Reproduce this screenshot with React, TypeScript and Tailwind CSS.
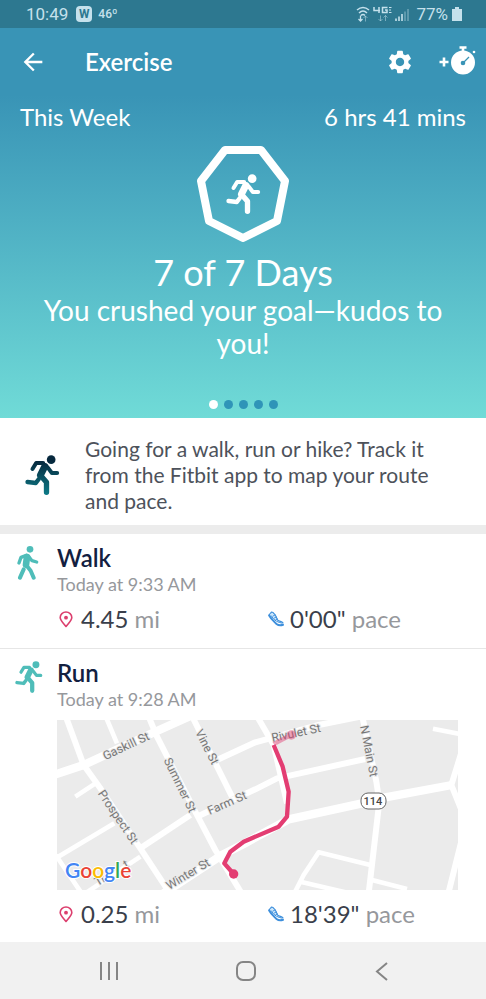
import React from 'react';
import { MdArrowBack, MdSettings } from 'react-icons/md';

function Runner({ className, gradient = false }: { className: string; gradient?: boolean }) {
  const paint = gradient ? 'url(#runner-fill)' : 'currentColor';
  return (
    <svg viewBox="0 0 104 120" className={className} fill="none" stroke={paint} strokeLinecap="round" strokeLinejoin="round" aria-hidden="true">
      {gradient && (
        <defs>
          <linearGradient id="runner-fill" gradientUnits="userSpaceOnUse" x1="0" y1="0" x2="0" y2="120">
            <stop offset="0.15" stopColor="#06283d" />
            <stop offset="1" stopColor="#0d7c88" />
          </linearGradient>
        </defs>
      )}
      <circle cx="78" cy="14" r="13" fill={paint} stroke="none" />
      <path d="M22 42 L33 24 L54 24" strokeWidth="12" />
      <path d="M59 34 L46 60" strokeWidth="21" />
      <path d="M68 38 L80 54 L96 54" strokeWidth="12" />
      <path d="M47 62 L64 82 L64 112" strokeWidth="16" />
      <path d="M7 81 L32 84 L41 72" strokeWidth="13" />
    </svg>
  );
}

function Walker({ className }: { className: string }) {
  return (
    <svg viewBox="0 0 66 102" className={className} fill="none" stroke="currentColor" strokeLinecap="round" strokeLinejoin="round" aria-hidden="true">
      <circle cx="39" cy="10" r="10" fill="currentColor" stroke="none" />
      <path d="M6 51 L12 34 L28 28" strokeWidth="10" />
      <path d="M30 33 L27 56" strokeWidth="20" />
      <path d="M34 30 L45 44 L59 48" strokeWidth="10" />
      <path d="M28 58 L41 74 L50 95" strokeWidth="12" />
      <path d="M20 70 L9 95" strokeWidth="12" />
    </svg>
  );
}

function Heptagon() {
  return (
    <svg viewBox="0 0 92 96" className="h-24 w-[92px]" fill="none" aria-hidden="true">
      <path d="M28 4 H64 L88 35 L80 75 L46 92 L12 75 L4 35 Z" stroke="white" strokeWidth="8" strokeLinejoin="round" />
    </svg>
  );
}

function Stopwatch() {
  return (
    <svg viewBox="0 0 38 32" className="h-8 w-[38px]" fill="none" aria-hidden="true">
      <path d="M6 11.500 V20.500 M1.500 16 H10.500" stroke="white" strokeWidth="2.600" />
      <circle cx="25" cy="16.500" r="12" fill="white" />
      <path d="M21.500 1.500 H28.500 M25 1 V6" stroke="white" strokeWidth="2.600" />
      <circle cx="36" cy="6" r="1.300" fill="white" />
      <path d="M25 17 L31 11" stroke="#3994b6" strokeWidth="1.300" />
      <circle cx="25" cy="17" r="2.300" fill="#3994b6" />
    </svg>
  );
}

function StatusIcons() {
  return (
    <svg viewBox="0 0 54 18" className="h-[18px] w-[54px]" fill="none" stroke="#c5e1ec" aria-hidden="true">
      <path d="M1 5 Q7 0 13 5 M3 8 Q7 4 11 8 M5 10.500 Q7 8.500 9 10.500" strokeWidth="1.500" />
      <path d="M4.500 10.500 V16 M2.500 14 L4.500 16 L6.500 14" strokeWidth="1.300" />
      <path d="M9.500 16.500 V11 M7.500 13 L9.500 11 L11.500 13" strokeWidth="1" opacity="0.5" />
      <path d="M18 2 V5.500 H24 M23 2 V8" strokeWidth="1.500" />
      <path d="M31.500 2.500 H26.500 V7.500 H31 V5 H29" strokeWidth="1.500" />
      <path d="M33 2.500 H35.500 M33 5 H35 M33 7.500 H35.500" strokeWidth="1.200" />
      <path d="M24.500 10.500 V16 M22.500 14 L24.500 16 L26.500 14 M29.500 16 V10.500 M27.500 12.500 L29.500 10.500 L31.500 12.500" strokeWidth="1" opacity="0.5" />
      <path d="M40 13.500 V16 M43 11.500 V16 M46 9 V16" strokeWidth="1.600" />
      <path d="M49 6.500 V16 M52 4 V16" strokeWidth="1.600" opacity="0.4" />
    </svg>
  );
}

function Pin() {
  return (
    <svg viewBox="0 0 14 17" className="h-[17px] w-3.5" fill="none" aria-hidden="true">
      <path d="M7 15.500 C4 11.500 1.200 9.500 1.200 6.500 A5.800 5.500 0 0 1 12.800 6.500 C12.800 9.500 10 11.500 7 15.500 Z" stroke="#dc3f6e" strokeWidth="1.600" strokeLinejoin="round" />
      <circle cx="7" cy="6.700" r="1.900" fill="#dc3f6e" />
    </svg>
  );
}

function Shoe() {
  return (
    <svg viewBox="0 0 16 16" className="size-4" fill="none" stroke="#3d8fdc" strokeLinecap="round" strokeLinejoin="round" aria-hidden="true">
      <path d="M1 4.500 L4 1 L5.500 1.500 L7 4.500 L9.500 9 L15 11.500 V13.500 Z" fill="#cfe8fb" stroke="none" />
      <path d="M1.200 4.200 C1 2.500 3 2.500 3.500 1 L5 1.500 C6 3 7 3 7.500 4.500 L9.500 8.800 C11 10.500 13.500 10.300 15 11.800" strokeWidth="1.200" />
      <path d="M1.200 4.500 C3 8 6 10.500 8.500 13 C10.500 14.500 13 14.500 15 13.800" strokeWidth="2" />
      <path d="M3.500 5 C5 8 8 11 13.500 12" strokeWidth="1" />
      <path d="M5 5 L7 4 M6.300 7 L8.300 6 M7.500 9 L9.300 8" strokeWidth="0.900" />
    </svg>
  );
}

const streetNames = [
  { name: 'Gaskill St', x: 69, y: 26, angle: -25 },
  { name: 'Prospect St', x: 61, y: 97, angle: 56 },
  { name: 'Summer St', x: 123, y: 65, angle: 64 },
  { name: 'Vine St', x: 150, y: 27, angle: 63 },
  { name: 'Farm St', x: 170, y: 83, angle: -24 },
  { name: 'Winter St', x: 131, y: 154, angle: -31 },
  { name: 'Tr', x: 43, y: 160, angle: -31 },
  { name: 't', x: 69, y: 144, angle: -31 },
  { name: 'Rivulet St', x: 239, y: 13, angle: -12 },
  { name: 'N Main St', x: 312, y: 31, angle: 79 },
];

function RouteMap() {
  return (
    <svg viewBox="0 0 401 170" className="block w-full bg-[#ebebeb] font-[Roboto,sans-serif]" role="img" aria-label="Map of the run">
      <g transform="scale(0.33333)" fill="none" stroke="white" strokeLinejoin="round">
        <g strokeWidth="25">
          <path d="M-10 165 L80 135 L285 40 L400 -12" />
          <path d="M320 520 L495 405 L560 372 L695 298 L915 250 L985 232 L1185 195" />
        </g>
        <g strokeWidth="18">
          <path d="M28 -6 L80 135 L130 205 L250 385 L340 522" />
          <path d="M275 -10 L300 50 L420 285 L475 390 L555 522" />
          <path d="M405 -12 L525 230" />
          <path d="M480 120 L595 67 L650 52 L785 15 L920 -12" />
          <path d="M420 290 L595 208 L660 175 L925 117" />
          <path d="M602 -8 L650 75 L690 250" />
          <path d="M916 -10 L958 185 L967 245 L935 520" />
          <path d="M1214 95 L1183 195 L1214 272" />
          <path d="M1214 360 L1174 520" />
          <path d="M250 385 L400 285" />
        </g>
        <g strokeWidth="14">
          <path d="M55 230 L120 187" />
          <path d="M148 -6 L180 70" />
          <path d="M-8 417 L172 310" />
          <path d="M-4 405 L74 520" />
          <path d="M85 520 L250 410" />
          <path d="M1128 26 L1210 42" />
          <path d="M712 520 L740 465 L785 397 L940 435" />
          <path d="M730 485 L870 518" />
          <path d="M945 480 L1050 507" />
        </g>
      </g>
      <g fill="#777777" stroke="#ebebeb" strokeWidth="2" className="text-[12px]" textAnchor="middle">
        {streetNames.map((s) => (
          <text key={s.name} transform={`translate(${s.x} ${s.y}) rotate(${s.angle})`} dy="4" paintOrder="stroke">
            {s.name}
          </text>
        ))}
      </g>
      <rect x="304" y="73" width="25" height="16" rx="7" fill="white" stroke="#666666" />
      <text x="316" y="85" textAnchor="middle" fill="#444444" className="text-[11px] font-medium">114</text>
      <g transform="scale(0.33333)" fill="none" stroke="#e33d72">
        <g opacity="0.45">
          <path d="M650 72 L700 46" strokeWidth="13" />
          <circle cx="703" cy="45" r="14" fill="#e33d72" stroke="none" />
        </g>
        <path d="M650 75 L677 140 L695 215 L690 290 L665 320 L560 365 L520 395 L502 430 L530 462" strokeWidth="13" strokeLinejoin="round" />
        <circle cx="530" cy="462" r="14" fill="#e33d72" stroke="none" />
      </g>
      <text x="8" y="158" className="font-[Lato,sans-serif] text-[21px] font-semibold" stroke="#ffffff" strokeWidth="2" paintOrder="stroke">
        <tspan fill="#4285f4">G</tspan>
        <tspan fill="#ea4335">o</tspan>
        <tspan fill="#fbbc05">o</tspan>
        <tspan fill="#4285f4">g</tspan>
        <tspan fill="#34a853">l</tspan>
        <tspan fill="#ea4335">e</tspan>
      </text>
    </svg>
  );
}

function Stats({ distance, pace }: { distance: string; pace: string }) {
  return (
    <div className="grid grid-cols-[211px_1fr] text-2xl leading-8 text-[#3a3f4b]">
      <p className="flex items-center gap-2 pl-0.5">
        <Pin />
        <span>{distance} <span className="text-[#96989c]">mi</span></span>
      </p>
      <p className="flex items-center gap-1.5">
        <Shoe />
        <span>{pace} <span className="text-[#96989c]">pace</span></span>
      </p>
    </div>
  );
}

export default function App() {
  return (
    <div className="bg-white font-[Lato,sans-serif]">
      <div className="flex h-7 items-center bg-[#2d7890] pl-[26px] pr-6 font-[Roboto,sans-serif] text-[#c5e1ec]">
        <span className="text-[17px] leading-7">10:49</span>
        <span className="ml-2 flex size-4 items-center justify-center rounded bg-[#c5e1ec] text-[12px] font-bold text-[#2d7890]">W</span>
        <span className="ml-1.5 text-[12px] font-medium">46º</span>
        <span className="ml-auto flex items-center gap-1.5">
          <StatusIcons />
          <span className="flex items-center gap-1 text-[17px] leading-7">
            77%
            <svg viewBox="0 0 10 14" className="h-3.5 w-2.5" fill="#c5e1ec" aria-hidden="true">
              <path d="M3 0 H7 V2 H10 V14 H0 V2 H3 Z" />
            </svg>
          </span>
        </span>
      </div>

      <header className="flex h-[67px] items-center bg-[#3994b6] pl-[19px] pr-2.5 text-white">
        <button type="button" aria-label="Back"><MdArrowBack className="size-7" /></button>
        <h1 className="ml-[38px] text-2xl font-semibold">Exercise</h1>
        <button type="button" aria-label="Settings" className="ml-auto"><MdSettings className="size-7" /></button>
        <button type="button" aria-label="Start exercise" className="ml-6"><Stopwatch /></button>
      </header>

      <section className="flex h-[323px] flex-col items-center bg-linear-to-b from-[#3994b6] to-[#70dbd7] text-white">
        <div className="flex w-full justify-between px-5 pt-1.5 text-2xl leading-8">
          <span>This Week</span>
          <span>6 hrs 41 mins</span>
        </div>
        <div className="mt-[13px] grid place-items-center *:col-start-1 *:row-start-1">
          <Heptagon />
          <Runner className="h-10 w-[35px]" />
        </div>
        <h2 className="mt-2.5 text-[36px] leading-10">7 of 7 Days</h2>
        <p className="mt-0.5 px-10 text-center text-[28px] leading-[33px]">You crushed your goal—kudos to you!</p>
        <div className="mb-[9px] mt-auto flex gap-1.5">
          <button type="button" aria-label="Page 1" className="size-[9px] rounded-full bg-white" />
          <button type="button" aria-label="Page 2" className="size-[9px] rounded-full bg-[#2f94b8]" />
          <button type="button" aria-label="Page 3" className="size-[9px] rounded-full bg-[#2f94b8]" />
          <button type="button" aria-label="Page 4" className="size-[9px] rounded-full bg-[#2f94b8]" />
          <button type="button" aria-label="Page 5" className="size-[9px] rounded-full bg-[#2f94b8]" />
        </div>
      </section>

      <section className="flex items-center border-b-[9px] border-[#ececec] pb-[11px] pl-[25px] pr-10 pt-[18px]">
        <Runner className="h-10 w-[35px] shrink-0" gradient />
        <p className="ml-[25px] text-[21px] leading-[26px] text-[#4d525b]">
          Going for a walk, run or hike? Track it from the Fitbit app to map your route and pace.
        </p>
      </section>

      <article className="flex border-b border-[#e6e6e6] pb-[13px] pl-[15px] pr-7 pt-2.5">
        <div className="w-[42px] shrink-0 pt-0.5 text-[#4fbdb9]"><Walker className="ml-0.5 h-[34px] w-[22px]" /></div>
        <div className="min-w-0 flex-1">
          <h3 className="text-2xl leading-7 font-semibold text-[#12203f]">Walk</h3>
          <p className="text-[18px] leading-6 text-[#96989c]">Today at 9:33 AM</p>
          <div className="mt-[7px]"><Stats distance="4.45" pace={'0\'00"'} /></div>
        </div>
      </article>

      <article className="flex pb-3 pl-[15px] pr-7 pt-2.5">
        <div className="w-[42px] shrink-0 pt-0.5 text-[#4fbdb9]"><Runner className="h-8 w-7" /></div>
        <div className="min-w-0 flex-1">
          <h3 className="text-2xl leading-7 font-semibold text-[#12203f]">Run</h3>
          <p className="text-[18px] leading-6 text-[#96989c]">Today at 9:28 AM</p>
          <div className="mb-2 mt-[9px]"><RouteMap /></div>
          <Stats distance="0.25" pace={'18\'39"'} />
        </div>
      </article>

      <nav className="flex h-[57px] items-center justify-between bg-[#f1f1f1] pl-[99px] pr-[93px] text-[#858585]" aria-label="System">
        <button type="button" aria-label="Recent apps">
          <svg viewBox="0 0 20 20" className="size-5" fill="none" stroke="currentColor" strokeWidth="2"><path d="M2 1 V19 M10 1 V19 M18 1 V19" /></svg>
        </button>
        <button type="button" aria-label="Home">
          <svg viewBox="0 0 20 20" className="size-5" fill="none" stroke="currentColor" strokeWidth="2"><rect x="1" y="1" width="18" height="18" rx="6" /></svg>
        </button>
        <button type="button" aria-label="Back">
          <svg viewBox="0 0 20 20" className="size-5" fill="none" stroke="currentColor" strokeWidth="2"><path d="M14 2 L4 10.500 L14 19" /></svg>
        </button>
      </nav>
    </div>
  );
}
